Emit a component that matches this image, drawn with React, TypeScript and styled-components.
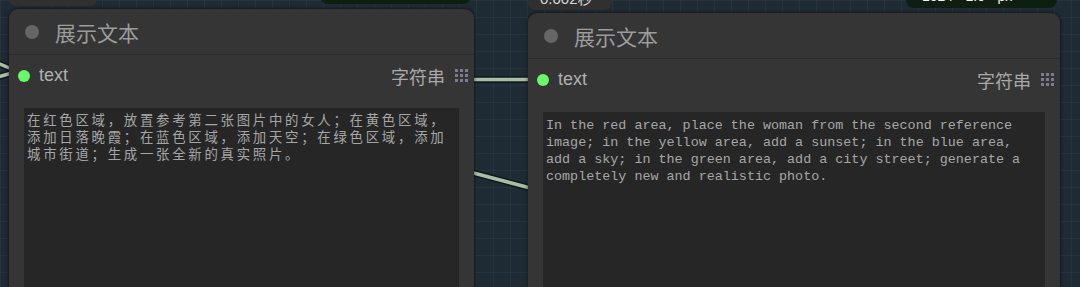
import styled, { createGlobalStyle } from "styled-components";

const GlobalStyle = createGlobalStyle`
    html, body {
        margin: 0;
        padding: 0;
        background: #1f2a33;
    }
    body {
        width: 1080px;
        height: 287px;
        overflow: hidden;
        font-family: "Liberation Sans", "Noto Sans CJK SC", sans-serif;
    }
`;

const Canvas = styled.main`
    position: relative;
    width: 1080px;
    height: 287px;
    overflow: hidden;
    background-color: #1f2b34;
    background-image:
        linear-gradient(rgba(255, 255, 255, 0.035) 1px, transparent 1px),
        linear-gradient(90deg, rgba(255, 255, 255, 0.035) 1px, transparent 1px);
    background-size: 17px 17px;
`;

const Wires = styled.svg`
    position: absolute;
    inset: 0;
    z-index: 0;
`;

const Node = styled.section<{ $x: number; $y: number; $w: number }>`
    position: absolute;
    z-index: 1;
    left: ${(p) => p.$x}px;
    top: ${(p) => p.$y}px;
    width: ${(p) => p.$w}px;
    height: 420px;
    display: flex;
    flex-direction: column;
    background: #353535;
    border-radius: 9px;
    box-shadow: 0 0 3px 1px rgba(0, 0, 0, 0.45);
`;

const TimeTab = styled.div<{ $w: number; $raise: number }>`
    position: absolute;
    left: 0;
    bottom: calc(100% + 3px);
    width: ${(p) => p.$w}px;
    height: 24px;
    display: flex;
    align-items: flex-end;
    padding: 0 12px ${(p) => p.$raise}px;
    box-sizing: border-box;
    background: #303030;
    border-radius: 8px;
    color: #d8d8d8;
    font-size: 15px;
    line-height: 18px;
    white-space: nowrap;
`;

const InfoPill = styled.div<{ $left: number; $raise: number }>`
    position: absolute;
    left: ${(p) => p.$left}px;
    bottom: calc(100% + 5px);
    width: 151px;
    height: 24px;
    display: flex;
    align-items: flex-end;
    padding: 0 16px ${(p) => p.$raise}px;
    box-sizing: border-box;
    background: #0e1f11;
    border-radius: 8px;
    color: #f0f0f0;
    font-size: 14px;
    line-height: 16px;
    white-space: nowrap;
`;

const TitleBar = styled.header`
    height: 45px;
    display: flex;
    align-items: center;
    gap: 16px;
    padding-left: 16px;
    border-bottom: 1px solid #2b2b2b;
`;

const TitleDot = styled.span`
    width: 14px;
    height: 14px;
    border-radius: 50%;
    background: #666;
`;

const Title = styled.span`
    font-family: "Noto Sans CJK SC", sans-serif;
    font-size: 21px;
    color: #9c9c9c;
`;

const InputRow = styled.div`
    height: 41px;
    display: flex;
    align-items: center;
    padding: 0 6px 0 9px;
`;

const SlotDot = styled.span`
    width: 12px;
    height: 12px;
    border-radius: 50%;
    background: #6cf66c;
    margin-right: 9px;
`;

const SlotName = styled.span`
    flex: 1;
    font-size: 18px;
    color: #b0b0b0;
`;

const SlotType = styled.span`
    font-family: "Noto Sans CJK SC", sans-serif;
    font-size: 18px;
    color: #a8a8a8;
    margin-right: 10px;
`;

const TextBox = styled.div<{ $cjk?: boolean }>`
    flex: 1;
    margin: 12px 15px 0;
    padding: 5px 3px;
    background: #262626;
    font-family: "Liberation Mono", "Noto Sans CJK SC", monospace;
    font-size: 13.4px;
    line-height: 17px;
    letter-spacing: ${(p) => (p.$cjk ? "2.74px" : "0")};
    color: #a6a6a6;
    white-space: pre-wrap;
    word-break: normal;
`;

function GridIcon() {
    const cells = [];
    for (let r = 0; r < 3; r++) {
        for (let c = 0; c < 3; c++) {
            cells.push(<rect key={r * 3 + c} x={c * 5} y={r * 5} width="3" height="3" fill="#7d7a92" />);
        }
    }
    return (
        <svg width="13" height="13" viewBox="0 0 13 13">
            {cells}
        </svg>
    );
}

function Wire({ d }: { d: string }) {
    return (
        <g fill="none" strokeLinecap="round">
            <path d={d} stroke="#11181b" strokeWidth="6.5" />
            <path d={d} stroke="#a9bea8" strokeWidth="3.5" />
        </g>
    );
}

type ShowTextProps = {
    x: number;
    y: number;
    w: number;
    tabWidth: number;
    pillLeft: number;
    raise: number;
    time: string;
    text: string;
    cjk?: boolean;
};

function ShowTextNode({ x, y, w, tabWidth, pillLeft, raise, time, text, cjk }: ShowTextProps) {
    return (
        <Node $x={x} $y={y} $w={w}>
            <TimeTab $w={tabWidth} $raise={raise}>{time}</TimeTab>
            <InfoPill $left={pillLeft} $raise={raise + 2}>1024 · 1.0 · px</InfoPill>
            <TitleBar>
                <TitleDot />
                <Title>展示文本</Title>
            </TitleBar>
            <InputRow>
                <SlotDot />
                <SlotName>text</SlotName>
                <SlotType>字符串</SlotType>
                <GridIcon />
            </InputRow>
            <TextBox $cjk={cjk}>{text}</TextBox>
        </Node>
    );
}

export default function App() {
    return (
        <>
            <GlobalStyle />
            <Canvas>
                <Wires width="1080" height="287">
                    <Wire d="M -20 56 L 12 69" />
                    <Wire d="M -20 82 L 12 73" />
                    <Wire d="M 466 79.5 L 536 79.5" />
                    <Wire d="M 466 171 L 536 189.5" />
                </Wires>
                <ShowTextNode
                    x={9}
                    y={9}
                    w={465}
                    tabWidth={88}
                    pillLeft={311}
                    raise={6}
                    time="0.010秒"
                    cjk
                    text="在红色区域，放置参考第二张图片中的女人；在黄色区域，添加日落晚霞；在蓝色区域，添加天空；在绿色区域，添加城市街道；生成一张全新的真实照片。"
                />
                <ShowTextNode
                    x={528}
                    y={13}
                    w={532}
                    tabWidth={84}
                    pillLeft={378}
                    raise={2}
                    time="0.002秒"
                    text="In the red area, place the woman from the second reference image; in the yellow area, add a sunset; in the blue area, add a sky; in the green area, add a city street; generate a completely new and realistic photo."
                />
            </Canvas>
        </>
    );
}
